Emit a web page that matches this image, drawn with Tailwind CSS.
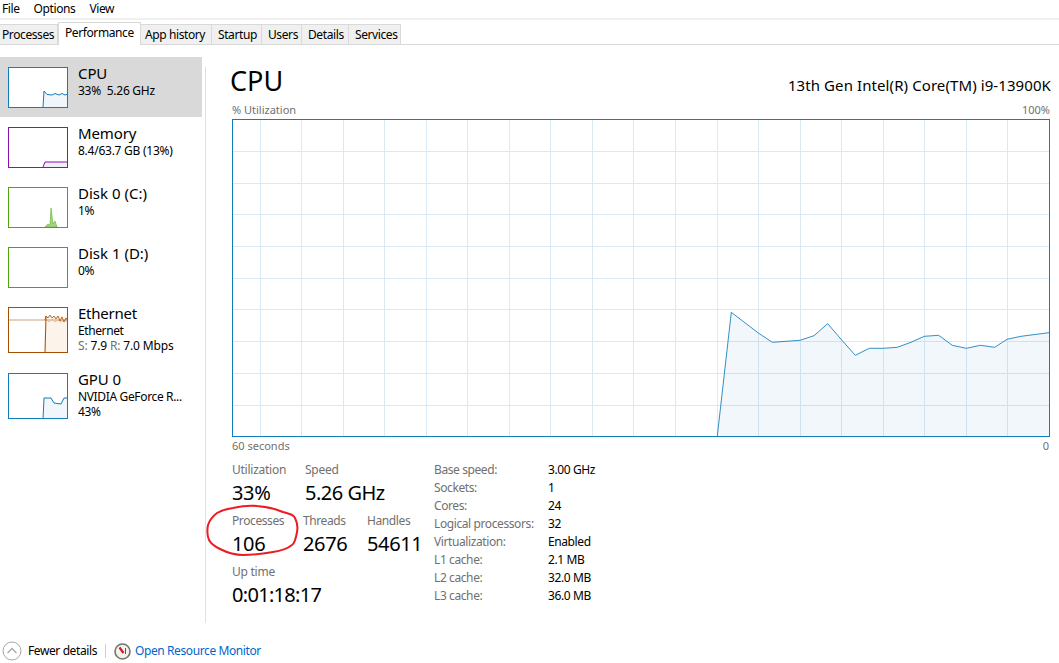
<!DOCTYPE html>
<html lang="en">
<head>
  <meta charset="UTF-8" />
  <title>Task Manager</title>
  <script src="https://cdn.jsdelivr.net/npm/@tailwindcss/browser@4"></script>
</head>
<body class="bg-white text-black font-['Noto_Sans',sans-serif] text-[12px] leading-[16px] tracking-[-0.4px] overflow-hidden">
<div class="relative w-[1059px] h-[663px] flex flex-col">

  <!-- Menu -->
  <div class="h-[18px] flex items-center pl-[2px] gap-[14px]">
    <span>File</span><span>Options</span><span>View</span>
  </div>
  <div class="h-[2px] bg-[#f0f0f0]"></div>

  <!-- Tabs -->
  <div class="h-[25px] flex items-end border-b border-[#d9d9d9]">
    <div class="h-[20px] w-[58px] pl-[2px] bg-[#f0f0f0] border-r border-t border-[#d9d9d9] leading-[20px]">Processes</div>
    <div class="h-[23px] w-[83px] -mb-px bg-white border-x border-t border-[#d9d9d9] pl-[6px] leading-[19px]">Performance</div>
    <div class="h-[20px] w-[71px] pl-[4px] bg-[#f0f0f0] border-r border-t border-[#d9d9d9] leading-[20px]">App history</div>
    <div class="h-[20px] w-[50px] pl-[6px] bg-[#f0f0f0] border-r border-t border-[#d9d9d9] leading-[20px]">Startup</div>
    <div class="h-[20px] w-[40px] pl-[6px] bg-[#f0f0f0] border-r border-t border-[#d9d9d9] leading-[20px]">Users</div>
    <div class="h-[20px] w-[47px] pl-[6px] bg-[#f0f0f0] border-r border-t border-[#d9d9d9] leading-[20px]">Details</div>
    <div class="h-[20px] w-[52px] pl-[6px] bg-[#f0f0f0] border-r border-t border-[#d9d9d9] leading-[20px]">Services</div>
  </div>

  <div class="flex h-[579px] pt-[12px]">
    <!-- Sidebar -->
    <div class="w-[202px] shrink-0">
      <div class="h-[60px] bg-[#d9d9d9] flex pl-[8px] pt-[10px] gap-[10px]">
        <svg class="w-[60px] h-[41px] bg-white shrink-0" viewBox="0 0 60 41">
          <path d="M35 40L36 24L39 27.5L44 28L47 26.5L51 28L54 26.5L57 28L60 27V40Z" fill="#f1f6fa" stroke="none"/>
          <path d="M35 40L36 24L39 27.5L44 28L47 26.5L51 28L54 26.5L57 28L60 27" fill="none" stroke="#117dbb"/>
          <rect x="0.5" y="0.5" width="59" height="40" fill="none" stroke="#117dbb"/>
        </svg>
        <div class="-mt-[4px]">
          <div class="text-[15px] leading-[20px] tracking-[-0.1px]">CPU</div>
          <div class="tracking-[-0.25px]">33%&nbsp; 5.26 GHz</div>
        </div>
      </div>
      <div class="h-[60px] flex pl-[8px] pt-[10px] gap-[10px]">
        <svg class="w-[60px] h-[41px] shrink-0" viewBox="0 0 60 41">
          <path d="M35 40L37 35H60V40Z" fill="#f2eef5"/>
          <path d="M35 40L37 35H60" fill="none" stroke="#8b12ae"/>
          <rect x="0.5" y="0.5" width="59" height="40" fill="none" stroke="#8b12ae"/>
        </svg>
        <div class="-mt-[4px]">
          <div class="text-[15px] leading-[20px] tracking-[-0.1px]">Memory</div>
          <div class="tracking-[-0.25px]">8.4/63.7 GB (13%)</div>
        </div>
      </div>
      <div class="h-[60px] flex pl-[8px] pt-[10px] gap-[10px]">
        <svg class="w-[60px] h-[41px] shrink-0" viewBox="0 0 60 41">
          <path d="M37 40L40 37L42 38L43 21L45 37L47 34L49 40Z" fill="#a9d28b" stroke="#4da60c" stroke-width="0.5"/>
          <rect x="0.5" y="0.5" width="59" height="40" fill="none" stroke="#4da60c"/>
        </svg>
        <div class="-mt-[4px]">
          <div class="text-[15px] leading-[20px] tracking-[0px]">Disk 0 (C:)</div>
          <div>1%</div>
        </div>
      </div>
      <div class="h-[60px] flex pl-[8px] pt-[10px] gap-[10px]">
        <svg class="w-[60px] h-[41px] shrink-0" viewBox="0 0 60 41">
          <rect x="0.5" y="0.5" width="59" height="40" fill="none" stroke="#4da60c"/>
        </svg>
        <div class="-mt-[4px]">
          <div class="text-[15px] leading-[20px] tracking-[0px]">Disk 1 (D:)</div>
          <div>0%</div>
        </div>
      </div>
      <div class="h-[66px] flex pl-[8px] pt-[10px] gap-[10px]">
        <svg class="w-[60px] h-[46px] shrink-0" viewBox="0 0 60 46">
          <path d="M36 46L37 9H60V46Z" fill="#fcf3ea"/>
          <path d="M0 13H60" stroke="#c9a27f" fill="none"/>
          <path d="M37 14L39 13L41 15L44 12L47 15L50 13L53 15L56 13L60 15" fill="none" stroke="#e6b48c" stroke-width="0.8"/>
          <path d="M37 13L38 9L40 11L42 8L44 11L46 9L48 12L50 9L52 14L54 10L56 15L58 11L60 14" fill="none" stroke="#a74f01" stroke-width="0.8"/>
          <path d="M37 46L38 9" fill="none" stroke="#a74f01"/>
          <rect x="0.5" y="0.5" width="59" height="45" fill="none" stroke="#a74f01"/>
        </svg>
        <div class="-mt-[4px]">
          <div class="text-[15px] leading-[20px] tracking-[-0.25px]">Ethernet</div>
          <div class="leading-[15px]">Ethernet</div>
          <div class="leading-[15px] tracking-[-0.15px]"><span class="text-[#707070]">S:</span> 7.9 <span class="text-[#707070]">R:</span> 7.0 Mbps</div>
        </div>
      </div>
      <div class="h-[66px] flex pl-[8px] pt-[10px] gap-[10px]">
        <svg class="w-[60px] h-[46px] shrink-0" viewBox="0 0 60 46">
          <path d="M35 46L36 25H43L46 30L53 31L56 25H60V46Z" fill="#f1f6fa"/>
          <path d="M35 46L36 25H43L46 30L53 31L56 25H60" fill="none" stroke="#117dbb"/>
          <rect x="0.5" y="0.5" width="59" height="45" fill="none" stroke="#117dbb"/>
        </svg>
        <div class="-mt-[4px]">
          <div class="text-[15px] leading-[20px] tracking-[-0.1px]">GPU 0</div>
          <div class="leading-[15px] tracking-[-0.35px]">NVIDIA GeForce R...</div>
          <div class="leading-[15px]">43%</div>
        </div>
      </div>
    </div>

    <!-- Detail pane -->
    <div class="ml-[3px] mt-[10px] h-[556px] border-l border-[#e0e0e0] pl-[26px] w-[854px]">
      <div class="-mt-[5px] flex items-start justify-between w-[819px] h-[40px]">
        <div class="-ml-[2px] pt-[1px] text-[27px] leading-[36px] tracking-[0px]">CPU</div>
        <div class="mt-[13px] text-[15px] leading-[20px] tracking-[0.09px]">13th Gen Intel(R) Core(TM) i9-13900K</div>
      </div>
      <div class="flex justify-between w-[818px] h-[17px] text-[11px] leading-[15px] tracking-[0px] text-[#707070]">
        <span>% Utilization</span><span>100%</span>
      </div>

      <!-- Graph -->
      <svg class="block w-[818px] h-[318px]" viewBox="232 119 818 318">
        <g stroke="#d9eaf4" fill="none">
          <path d="M233 151.5H1049M233 183.5H1049M233 214.5H1049M233 246.5H1049M233 278.5H1049M233 309.5H1049M233 341.5H1049M233 373.5H1049M233 405.5H1049"/>
          <path d="M260.5 120V436M301.5 120V436M343.5 120V436M384.5 120V436M426.5 120V436M467.5 120V436M509.5 120V436M550.5 120V436M592.5 120V436M633.5 120V436M675.5 120V436M717.5 120V436M758.5 120V436M800.5 120V436M841.5 120V436M883.5 120V436M924.5 120V436M966.5 120V436M1007.5 120V436"/>
        </g>
        <path d="M717.3 436L731.3 312.3L758.3 333L772.3 342.3L800 340.3L814 335.7L827.7 323.7L841.7 340L855.3 355.3L869.3 348.3L883.3 348.3L897.3 347.3L911 342.3L924.3 336.3L938.7 335.3L952.3 345.3L966.3 348.3L980.3 345.3L994.7 347.3L1007 339.3L1021 336.3L1049 332.7V436Z" fill="#117dbb" fill-opacity="0.06"/>
        <path d="M717.3 436L731.3 312.3L758.3 333L772.3 342.3L800 340.3L814 335.7L827.7 323.7L841.7 340L855.3 355.3L869.3 348.3L883.3 348.3L897.3 347.3L911 342.3L924.3 336.3L938.7 335.3L952.3 345.3L966.3 348.3L980.3 345.3L994.7 347.3L1007 339.3L1021 336.3L1049 332.7" fill="none" stroke="#117dbb" stroke-opacity="0.85"/>
        <rect x="232.5" y="119.5" width="817" height="317" fill="none" stroke="#117dbb"/>
      </svg>
      <div class="flex justify-between w-[817px] h-[16px] mt-[1px] text-[11px] leading-[16px] tracking-[0px] text-[#707070]">
        <span>60 seconds</span><span>0</span>
      </div>

      <!-- Stats -->
      <div class="flex mt-[8px]">
        <div class="w-[202px] shrink-0">
          <div class="flex h-[51px]">
            <div class="w-[73px]">
              <div class="text-[#707070] tracking-[-0.25px]">Utilization</div>
              <div class="text-[20px] leading-[30px] tracking-[-0.35px]">33%</div>
            </div>
            <div>
              <div class="text-[#707070] tracking-[-0.25px]">Speed</div>
              <div class="text-[20px] leading-[30px] tracking-[-0.5px]">5.26 GHz</div>
            </div>
          </div>
          <div class="flex h-[51px]">
            <div class="w-[71px]">
              <div class="text-[#707070]">Processes</div>
              <div class="text-[20px] leading-[30px] tracking-[-0.35px]">106</div>
            </div>
            <div class="w-[64px]">
              <div class="text-[#707070]">Threads</div>
              <div class="text-[20px] leading-[30px] tracking-[-0.35px]">2676</div>
            </div>
            <div>
              <div class="text-[#707070]">Handles</div>
              <div class="text-[20px] leading-[30px] tracking-[-0.35px]">54611</div>
            </div>
          </div>
          <div>
            <div class="text-[#707070] tracking-[-0.25px]">Up time</div>
            <div class="text-[20px] leading-[30px] tracking-[-0.7px]">0:01:18:17</div>
          </div>
        </div>
        <div class="grid grid-cols-[114px_auto] auto-rows-[18px] leading-[18px] -mt-[1px]">
          <span class="text-[#707070]">Base speed:</span><span>3.00 GHz</span>
          <span class="text-[#707070]">Sockets:</span><span>1</span>
          <span class="text-[#707070]">Cores:</span><span>24</span>
          <span class="text-[#707070]">Logical processors:</span><span>32</span>
          <span class="text-[#707070]">Virtualization:</span><span>Enabled</span>
          <span class="text-[#707070]">L1 cache:</span><span>2.1 MB</span>
          <span class="text-[#707070]">L2 cache:</span><span>32.0 MB</span>
          <span class="text-[#707070]">L3 cache:</span><span>36.0 MB</span>
        </div>
      </div>
    </div>
  </div>

  <!-- Footer -->
  <div class="absolute left-0 bottom-0 h-[24px] w-full flex items-center pl-[2px]">
    <svg class="w-[20px] h-[20px]" viewBox="0 0 20 20">
      <circle cx="10" cy="10" r="9" fill="#fff" stroke="#a8a8a8"/>
      <path d="M5.5 12L10 7.5L14.5 12" fill="none" stroke="#a8a8a8" stroke-width="1.3"/>
    </svg>
    <span class="ml-[6px]">Fewer details</span>
    <div class="ml-[8px] w-px h-[14px] bg-[#d0d0d0]"></div>
    <svg class="ml-[8px] w-[17px] h-[17px]" viewBox="0 0 17 17">
      <circle cx="8.5" cy="8.5" r="7.5" fill="#f4f2ec" stroke="#77736a" stroke-width="1.6"/>
      <path d="M5.5 4.5L9.5 10" stroke="#c8202a" stroke-width="2.2" fill="none"/>
      <path d="M11.5 5V11" stroke="#55524c" fill="none"/>
    </svg>
    <span class="ml-[4px] text-[#0066cc]">Open Resource Monitor</span>
  </div>

  <!-- Red hand drawn ring -->
  <svg class="absolute left-[205px] top-[503px] w-[95px] h-[56px]" viewBox="205 503 95 56">
    <path d="M233 508C242 506 250 505 257 506C268 507 276 509 283 512C290 514 294 515 295 518C297 522 298 527 297 532C296 538 295 543 292 545C287 549 280 551 273 552C262 554 252 555 243 555C234 555 226 552 220 549C214 546 211 544 209 540C207 535 207 530 208 525C210 519 213 516 217 513C222 510 227 509 233 508Z" fill="none" stroke="#ec1c24" stroke-width="2"/>
  </svg>
</div>
</body>
</html>
